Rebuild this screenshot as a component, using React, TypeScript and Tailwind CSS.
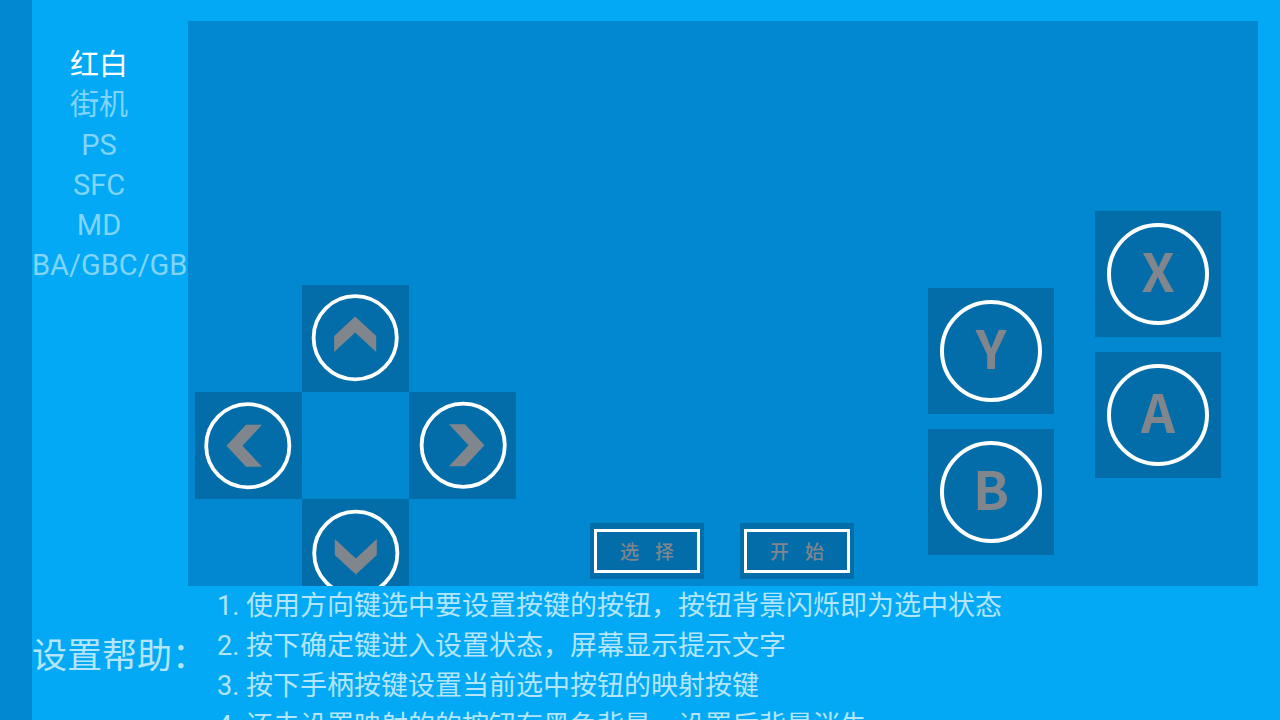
import { useState } from "react";

const SYSTEMS = ["红白", "街机", "PS", "SFC", "MD", "BA/GBC/GB"];

const HELP_LINES = [
  "使用方向键选中要设置按键的按钮，按钮背景闪烁即为选中状态",
  "按下确定键进入设置状态，屏幕显示提示文字",
  "按下手柄按键设置当前选中按钮的映射按键",
  "还未设置映射的的按钮有黑色背景，设置后背景消失",
];

interface ArrowButtonProps {
  label: string;
  place: string;
  rotate: string;
}

function ArrowButton({ label, place, rotate }: ArrowButtonProps) {
  return (
    <button type="button" aria-label={label} className={`bg-[#026da9] ${place}`}>
      <svg viewBox="0 0 107 107" className={`size-full ${rotate}`} fill="none">
        <circle cx="53.2" cy="52.8" r="41.6" stroke="#fff" strokeWidth="3.8" />
        <path d="M53.2 31.5 74.2 51V67L53.2 47.5 32.2 67V51Z" fill="#80868b" />
      </svg>
    </button>
  );
}

function FaceButton({ label }: { label: string }) {
  return (
    <button type="button" className="flex size-[126px] items-center justify-center bg-[#026da9]">
      <span className="flex size-[102px] items-center justify-center rounded-full border-4 border-white pb-2.5 font-['Noto_Sans_CJK_SC',sans-serif] text-[53px] leading-none font-bold text-[#80868b]">
        {label}
      </span>
    </button>
  );
}

function MenuButton({ label }: { label: string }) {
  return (
    <button type="button" className="h-14 w-[114px] bg-[#026da9] px-1 py-[6px]">
      <span className="flex size-full items-center justify-center gap-4 border-3 border-white pb-0.5 font-['Noto_Sans_CJK_SC',sans-serif] text-[19px] leading-none font-medium text-[#80868b]">
        {Array.from(label).map((char) => (
          <span key={char}>{char}</span>
        ))}
      </span>
    </button>
  );
}

export default function App() {
  const [active, setActive] = useState("红白");

  return (
    <div className="flex h-screen overflow-hidden bg-[#03a9f4] font-[Roboto,'Noto_Sans_CJK_SC',sans-serif]">
      <div className="w-8 shrink-0 bg-[#0288d1]" />

      <div className="flex min-w-0 flex-1 flex-col">
        <div className="flex min-h-0 flex-1">
          <nav className="flex w-[156px] shrink-0 flex-col overflow-hidden pt-[45px] pr-[22px]">
            {SYSTEMS.map((name) => (
              <button
                key={name}
                type="button"
                onClick={() => setActive(name)}
                className={`text-center text-[29px] leading-10 whitespace-nowrap ${
                  name === active ? "text-white" : "text-[#81d4fa]"
                }`}
              >
                {name}
              </button>
            ))}
          </nav>

          <main className="mt-[21px] mr-[22px] flex min-w-0 flex-1 items-end justify-between overflow-hidden bg-[#0288d1] pr-[37px] pl-[7px]">
            <div className="-mb-5 grid grid-cols-[repeat(3,107px)] grid-rows-[repeat(3,107px)]">
              <ArrowButton label="上" place="col-start-2 row-start-1" rotate="rotate-0" />
              <ArrowButton label="左" place="col-start-1 row-start-2" rotate="-rotate-90" />
              <ArrowButton label="右" place="col-start-3 row-start-2" rotate="rotate-90" />
              <ArrowButton label="下" place="col-start-2 row-start-3" rotate="rotate-180" />
            </div>

            <div className="mb-[7px] flex gap-9">
              <MenuButton label="选择" />
              <MenuButton label="开始" />
            </div>

            <div className="flex items-end gap-[41px]">
              <div className="mb-[31px] flex flex-col gap-[15px]">
                <FaceButton label="Y" />
                <FaceButton label="B" />
              </div>
              <div className="mb-[108px] flex flex-col gap-[15px]">
                <FaceButton label="X" />
                <FaceButton label="A" />
              </div>
            </div>
          </main>
        </div>

        <section className="flex h-[134px] shrink-0 gap-2.5 overflow-hidden text-[#b3e5fc]">
          <h2 className="flex shrink-0 items-center pt-2 text-[35px]">设置帮助：</h2>
          <ol className="text-[27px] leading-10 whitespace-nowrap">
            {HELP_LINES.map((line, i) => (
              <li key={line}>
                {i + 1}. {line}
              </li>
            ))}
          </ol>
        </section>
      </div>
    </div>
  );
}
